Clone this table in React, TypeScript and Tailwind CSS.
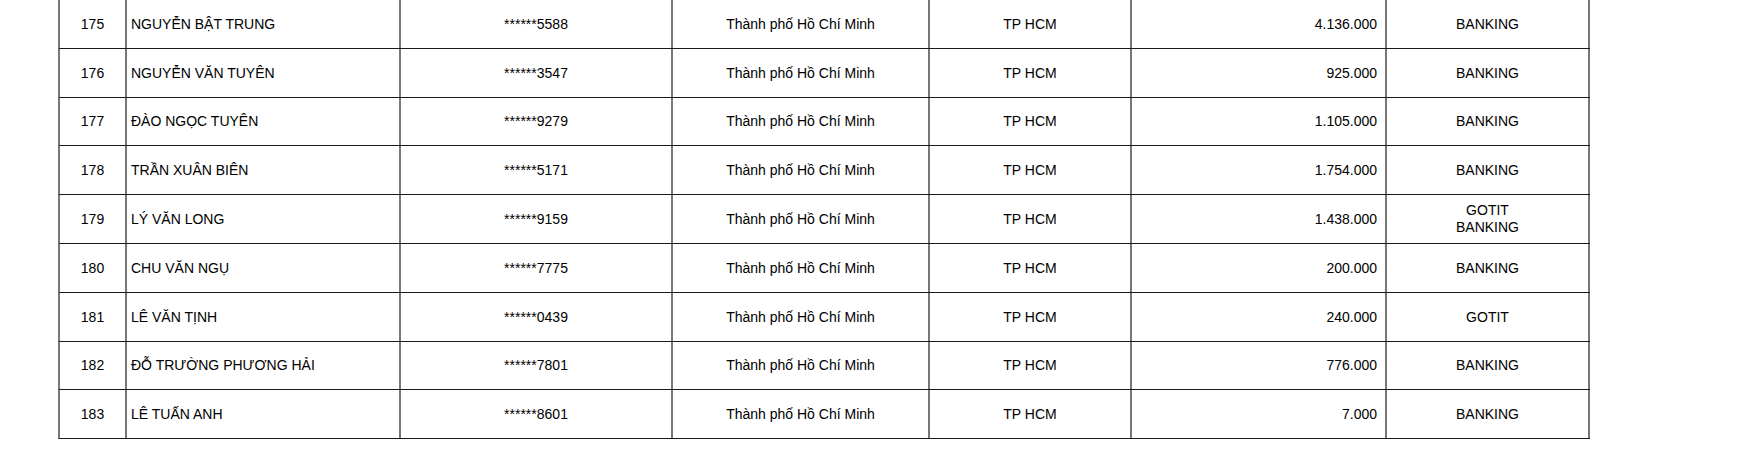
import React from "react"

type Row = {
  stt: number
  name: string
  id: string
  city: string
  area: string
  amount: string
  method: string[]
  h: string
}

const rows: Row[] = [
  { stt: 175, name: "NGUYỄN BẬT TRUNG", id: "******5588", city: "Thành phố Hồ Chí Minh", area: "TP HCM", amount: "4.136.000", method: ["BANKING"], h: "h-[49px]" },
  { stt: 176, name: "NGUYỄN VĂN TUYÊN", id: "******3547", city: "Thành phố Hồ Chí Minh", area: "TP HCM", amount: "925.000", method: ["BANKING"], h: "h-[49px]" },
  { stt: 177, name: "ĐÀO NGỌC TUYÊN", id: "******9279", city: "Thành phố Hồ Chí Minh", area: "TP HCM", amount: "1.105.000", method: ["BANKING"], h: "h-[48px]" },
  { stt: 178, name: "TRẦN XUÂN BIÊN", id: "******5171", city: "Thành phố Hồ Chí Minh", area: "TP HCM", amount: "1.754.000", method: ["BANKING"], h: "h-[49px]" },
  { stt: 179, name: "LÝ VĂN LONG", id: "******9159", city: "Thành phố Hồ Chí Minh", area: "TP HCM", amount: "1.438.000", method: ["GOTIT", "BANKING"], h: "h-[49px]" },
  { stt: 180, name: "CHU VĂN NGỤ", id: "******7775", city: "Thành phố Hồ Chí Minh", area: "TP HCM", amount: "200.000", method: ["BANKING"], h: "h-[49px]" },
  { stt: 181, name: "LÊ VĂN TỊNH", id: "******0439", city: "Thành phố Hồ Chí Minh", area: "TP HCM", amount: "240.000", method: ["GOTIT"], h: "h-[49px]" },
  { stt: 182, name: "ĐỖ TRƯỜNG PHƯƠNG HẢI", id: "******7801", city: "Thành phố Hồ Chí Minh", area: "TP HCM", amount: "776.000", method: ["BANKING"], h: "h-[48px]" },
  { stt: 183, name: "LÊ TUẤN ANH", id: "******8601", city: "Thành phố Hồ Chí Minh", area: "TP HCM", amount: "7.000", method: ["BANKING"], h: "h-[49px]" },
]

const cell = "flex items-center border-r-2 border-[#777777]"

export default function App() {
  return (
    <div className="w-[1756px] h-[465px] bg-white overflow-hidden font-['Liberation_Sans',Arial,sans-serif] text-[14px] text-black">
      <div className="ml-[58px] w-[1532px]">
        {rows.map((r) => (
          <div
            key={r.stt}
            className={`grid grid-cols-[67px_274px_272px_257px_202px_255px_203px] border-l-2 border-b border-l-[#777777] border-b-[#1a1a1a] ${r.h}`}
          >
            <div className={`${cell} justify-center`}>{r.stt}</div>
            <div className={`${cell} pl-[4px]`}>{r.name}</div>
            <div className={`${cell} justify-center`}>{r.id}</div>
            <div className={`${cell} justify-center`}>{r.city}</div>
            <div className={`${cell} justify-center`}>{r.area}</div>
            <div className={`${cell} justify-end pr-[8px]`}>{r.amount}</div>
            <div className={`${cell} flex-col justify-center leading-[17px]`}>
              {r.method.map((m) => (
                <span key={m}>{m}</span>
              ))}
            </div>
          </div>
        ))}
      </div>
    </div>
  )
}
